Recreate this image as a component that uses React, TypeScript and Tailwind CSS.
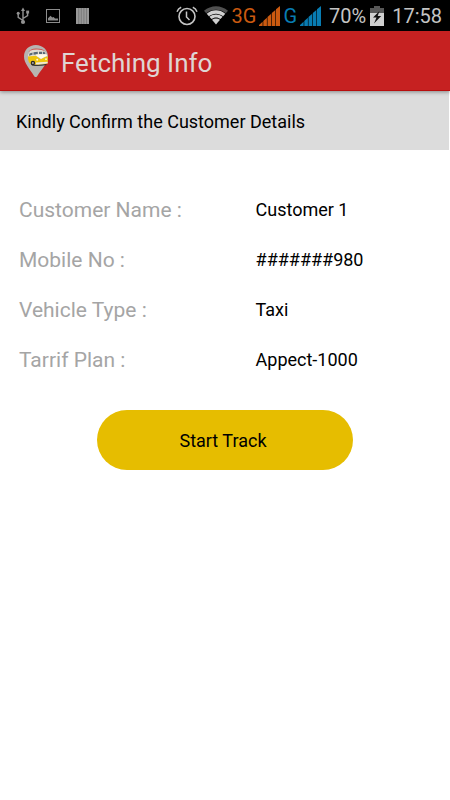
import React from "react";

function UsbIcon() {
  return (
    <svg width="14" height="18" viewBox="0 0 14 18" fill="none" stroke="#929292" strokeWidth="1.4" aria-hidden="true">
      <path d="M7 14V3M7 13.5L2.2 10.4V6.5M7 11.5L11.6 8.6V5" />
      <path d="M7 0.5L9 4H5Z" fill="#929292" stroke="none" />
      <circle cx="7" cy="15" r="2.1" fill="#929292" stroke="none" />
      <circle cx="2.2" cy="6.3" r="1.5" fill="#929292" stroke="none" />
      <rect x="10.2" y="3.6" width="2.9" height="2.9" fill="#929292" stroke="none" />
    </svg>
  );
}

function PictureIcon() {
  return (
    <svg width="14" height="14" viewBox="0 0 14 14" aria-hidden="true">
      <rect x="0.5" y="0.5" width="13" height="13" fill="none" stroke="#8c8c8c" />
      <path d="M2 11.5V9.2L4.5 6.8L6.3 8.6L7.6 8L9 9.4H12V11.5Z" fill="#8c8c8c" />
    </svg>
  );
}

function BarcodeIcon() {
  return (
    <svg width="13" height="16" viewBox="0 0 13 16" aria-hidden="true">
      <rect width="13" height="16" fill="#989898" />
      <path d="M2.7 0V16M5.3 0V16M7.9 0V16M10.5 0V16" stroke="#666" strokeWidth="0.6" />
    </svg>
  );
}

function AlarmIcon() {
  return (
    <svg width="22" height="20" viewBox="0 0 22 20" fill="none" stroke="#c4c4c4" aria-hidden="true">
      <circle cx="11" cy="10.5" r="8" strokeWidth="1.6" />
      <path d="M10.5 5.5V11L13.5 14" strokeWidth="1.5" />
      <path d="M1 5.8C1.7 3.6 3.1 2 5.2 1.2M21 5.8C20.3 3.6 18.9 2 16.8 1.2" strokeWidth="1.5" />
    </svg>
  );
}

function WifiIcon() {
  return (
    <svg width="24" height="19" viewBox="0 0 24 19" aria-hidden="true">
      <path d="M0 4.8C7 -1.2 17 -1.2 24 4.8L21.8 7.2C16 2.6 8 2.6 2.2 7.2Z" fill="#505050" />
      <path d="M2.7 7.8C8.4 3.2 15.6 3.2 21.3 7.8L19.1 10.2C14.9 6.8 9.1 6.8 4.9 10.2Z" fill="#d0d0d0" />
      <path d="M5.4 10.8C9.4 7.6 14.6 7.6 18.6 10.8L16.5 13.1C13.9 11 10.1 11 7.5 13.1Z" fill="#d0d0d0" />
      <path d="M12 18.5L8 13.7C10.3 12 13.7 12 16 13.7Z" fill="#d0d0d0" />
    </svg>
  );
}

function SignalIcon({ color }: { color: string }) {
  return (
    <svg width="21" height="20" viewBox="0 0 21 20" fill={color} aria-hidden="true">
      <path d="M0 20V19L3.6 15.8V20Z" />
      <path d="M4.3 20V15L7.9 11.8V20Z" />
      <path d="M8.5 20V11L12.2 7.8V20Z" />
      <path d="M12.8 20V7L16.4 4V20Z" />
      <path d="M17 20V3.3L21 0V20Z" />
    </svg>
  );
}

function BatteryIcon() {
  return (
    <svg width="14" height="20" viewBox="0 0 14 20" aria-hidden="true">
      <path d="M4 0H10V2H14V7H0V2H4Z" fill="#585858" />
      <rect y="7" width="14" height="13" fill="#d0d0d0" />
      <path d="M9.5 5L3 11.5H6.5L4 17.5L11.2 10H7.7Z" fill="#111" />
    </svg>
  );
}

function LogoIcon() {
  return (
    <svg width="26" height="34" viewBox="0 0 26 34" aria-hidden="true">
      <path d="M12.8 1C5.8 1 1 6 1 12.4C1 19 6.2 24 11.2 32.2Q12.7 34 14.2 32.2C19.2 24 25 19 25 12.4C25 6 19.8 1 12.8 1Z" fill="#b7b4b1" />
      <path d="M5.6 8Q7.5 4.8 13 4.6Q20 4.6 22.7 8Z" fill="#c9544c" />
      <path d="M7 6.8Q10 5.6 14 5.6Q19 5.6 22 7.2L23 8.2H6Z" fill="#dedbd5" />
      <path d="M5.2 10.4Q6 7.6 10 7H18.5Q23 7.4 24.3 12.6L5.2 14Z" fill="#e4dfd3" />
      <path d="M6.5 9.6L9.5 8.4V10.8L6 11.7ZM10.5 8.2L14.8 7.8V10.2L10.5 10.7ZM16 7.8H19V10L16 10.1ZM19.8 7.8H21.4L22.6 10H19.8Z" fill="#596977" />
      <path d="M5 12.6L13 11.8L17 15L24.7 12.2Q25.5 17 24 20L9 20.7Q4.6 19 5 12.6Z" fill="#eec40c" />
      <path d="M13 11.3L18 15L24.3 11.5L23.3 10.4H13Z" fill="#fffbe8" />
      <path d="M13 18.4L24.7 17.8V19.4L13 20.2Z" fill="#eee9dc" />
      <path d="M8 20Q15 22 24 19.8L23 21.2Q15 22.6 9 21.4Z" fill="#383838" />
      <circle cx="9.9" cy="19" r="2.2" fill="#292929" />
      <circle cx="9.9" cy="19" r="1" fill="#aaa" />
      <circle cx="14.2" cy="15.8" r="1" fill="#fff7cf" />
      <circle cx="23" cy="15.2" r="0.9" fill="#fff7cf" />
    </svg>
  );
}

const details = [
  { label: "Customer Name :", value: "Customer 1" },
  { label: "Mobile No :", value: "#######980" },
  { label: "Vehicle Type :", value: "Taxi" },
  { label: "Tarrif Plan :", value: "Appect-1000" },
];

export default function App() {
  return (
    <div className="min-h-screen bg-white font-[Roboto,sans-serif] text-black">
      <div className="flex h-[31px] items-center justify-between bg-black pr-2 pl-4 text-xl text-[#c4c4c4]">
        <div className="flex items-center gap-4">
          <UsbIcon />
          <PictureIcon />
          <BarcodeIcon />
        </div>
        <div className="flex items-center">
          <div className="flex items-center gap-1.5">
            <AlarmIcon />
            <WifiIcon />
          </div>
          <div className="ml-1 flex items-center gap-[3px]">
            <span className="text-[#cb5a10]">3G</span>
            <SignalIcon color="#cb5a10" />
            <span className="text-[#087cb2]">G</span>
            <SignalIcon color="#087cb2" />
          </div>
          <span className="ml-2">70%</span>
          <div className="mx-1">
            <BatteryIcon />
          </div>
          <span className="ml-1">17:58</span>
        </div>
      </div>

      <header className="relative flex h-[60px] items-center gap-3 border-b border-[#b80d0d] bg-[#c62121] pl-[23px] shadow-[0_1px_4px_rgba(0,0,0,0.4)]">
        <LogoIcon />
        <h1 className="pt-1 text-[26px] leading-8 text-[#dfd5d3]">Fetching Info</h1>
      </header>

      <main>
        <h2 className="mr-px flex h-[59px] items-center bg-[#dcdcdc] px-4 pt-0.5 text-lg">
          Kindly Confirm the Customer Details
        </h2>
        <dl className="mt-[34px] pr-4 pl-[19px]">
          {details.map((item) => (
            <div key={item.label} className="flex h-[50px] items-center pt-0.5">
              <dt className="w-[57%] text-[21px] leading-8 text-[#a5a5a5]">{item.label}</dt>
              <dd className="text-lg">{item.value}</dd>
            </div>
          ))}
        </dl>
        <div className="mt-[26px] flex justify-center">
          <button type="button" className="h-[60px] w-[57%] rounded-full bg-[#e6bd00] pt-0.5 pr-1 text-lg">
            Start Track
          </button>
        </div>
      </main>
    </div>
  );
}
